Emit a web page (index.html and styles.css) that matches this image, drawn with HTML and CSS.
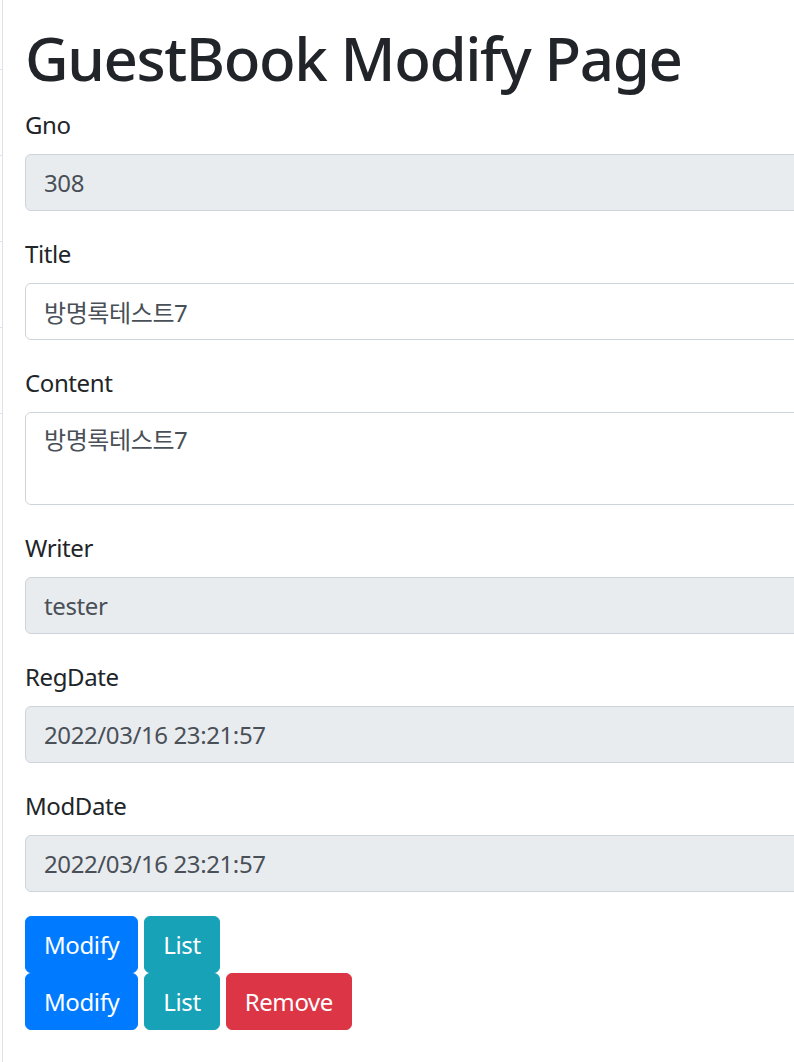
FILE: index.html
```html
<!DOCTYPE html>
<html lang="ko">
<head>
  <meta charset="UTF-8" />
  <title>GuestBook Modify Page</title>
  <link rel="stylesheet" href="styles.css">
</head>
<body>
  <div class="wrapper">
    <nav class="sidebar">
      <div class="side-item first"></div>
      <div class="side-item"></div>
      <div class="side-item"></div>
      <div class="side-item"></div>
      <div class="side-item"></div>
    </nav>

    <main class="content">
      <h1>GuestBook Modify Page</h1>

      <form class="modify-form">
        <div class="form-group">
          <label>Gno</label>
          <input type="text" class="form-control" value="308" readonly />
        </div>
        <div class="form-group">
          <label>Title</label>
          <input type="text" class="form-control" value="방명록테스트7" />
        </div>
        <div class="form-group">
          <label>Content</label>
          <textarea class="form-control" rows="2">방명록테스트7</textarea>
        </div>
        <div class="form-group">
          <label>Writer</label>
          <input type="text" class="form-control" value="tester" readonly />
        </div>
        <div class="form-group">
          <label>RegDate</label>
          <input type="text" class="form-control" value="2022/03/16 23:21:57" readonly />
        </div>
        <div class="form-group">
          <label>ModDate</label>
          <input type="text" class="form-control" value="2022/03/16 23:21:57" readonly />
        </div>
      </form>

      <div class="btn-row">
        <button type="button" class="btn btn-primary">Modify</button>
        <button type="button" class="btn btn-info">List</button>
      </div>
      <div class="btn-row">
        <button type="button" class="btn btn-primary">Modify</button>
        <button type="button" class="btn btn-info">List</button>
        <button type="button" class="btn btn-danger">Remove</button>
      </div>
    </main>
  </div>
</body>
</html>
```

FILE: styles.css
```css
body {
  margin: 0;
  background: #fff;
  color: #212529;
  font-family: "Segoe UI", "Noto Sans", "Noto Sans CJK KR", sans-serif;
  font-size: 24px;
  line-height: 1.5;
  letter-spacing: -0.4px;
  overflow: hidden;
}
.wrapper {
  display: flex;
  min-height: 1062px;
}
.sidebar {
  width: 2px;
  flex-shrink: 0;
  border-right: 1px solid #dee2e6;
}
.side-item {
  height: 85px;
  border-bottom: 1px solid #dee2e6;
}
.side-item.first {
  height: 69px;
}
.content {
  padding: 22px 0 0 22px;
  width: 1000px;
  flex-shrink: 0;
}
h1 {
  margin: 0 0 12px;
  font-size: 60px;
  font-weight: 500;
  line-height: 1.2;
  letter-spacing: -1.4px;
}
.form-group {
  margin-bottom: 24px;
}
label {
  display: block;
  padding-top: 1px;
  margin-bottom: 11px;
}
.form-control {
  display: block;
  width: 100%;
  height: 57px;
  padding: 9px 18px;
  font-family: inherit;
  font-size: 24px;
  line-height: 1.5;
  letter-spacing: -0.4px;
  color: #495057;
  background: #fff;
  border: 1px solid #ced4da;
  border-radius: 6px;
  box-sizing: border-box;
}
.form-control[readonly] {
  background: #e9ecef;
}
textarea.form-control {
  height: 93px;
  resize: none;
  overflow: hidden;
}
.btn-row {
  display: flex;
  gap: 6px;
}
.btn {
  height: 57px;
  padding: 0 18px;
  font-family: inherit;
  font-size: 24px;
  line-height: 1.5;
  letter-spacing: -0.4px;
  color: #fff;
  border: 1px solid transparent;
  border-radius: 6px;
}
.btn-primary {
  background: #007bff;
  border-color: #007bff;
}
.btn-info {
  background: #17a2b8;
  border-color: #17a2b8;
}
.btn-danger {
  background: #dc3545;
  border-color: #dc3545;
}
```
